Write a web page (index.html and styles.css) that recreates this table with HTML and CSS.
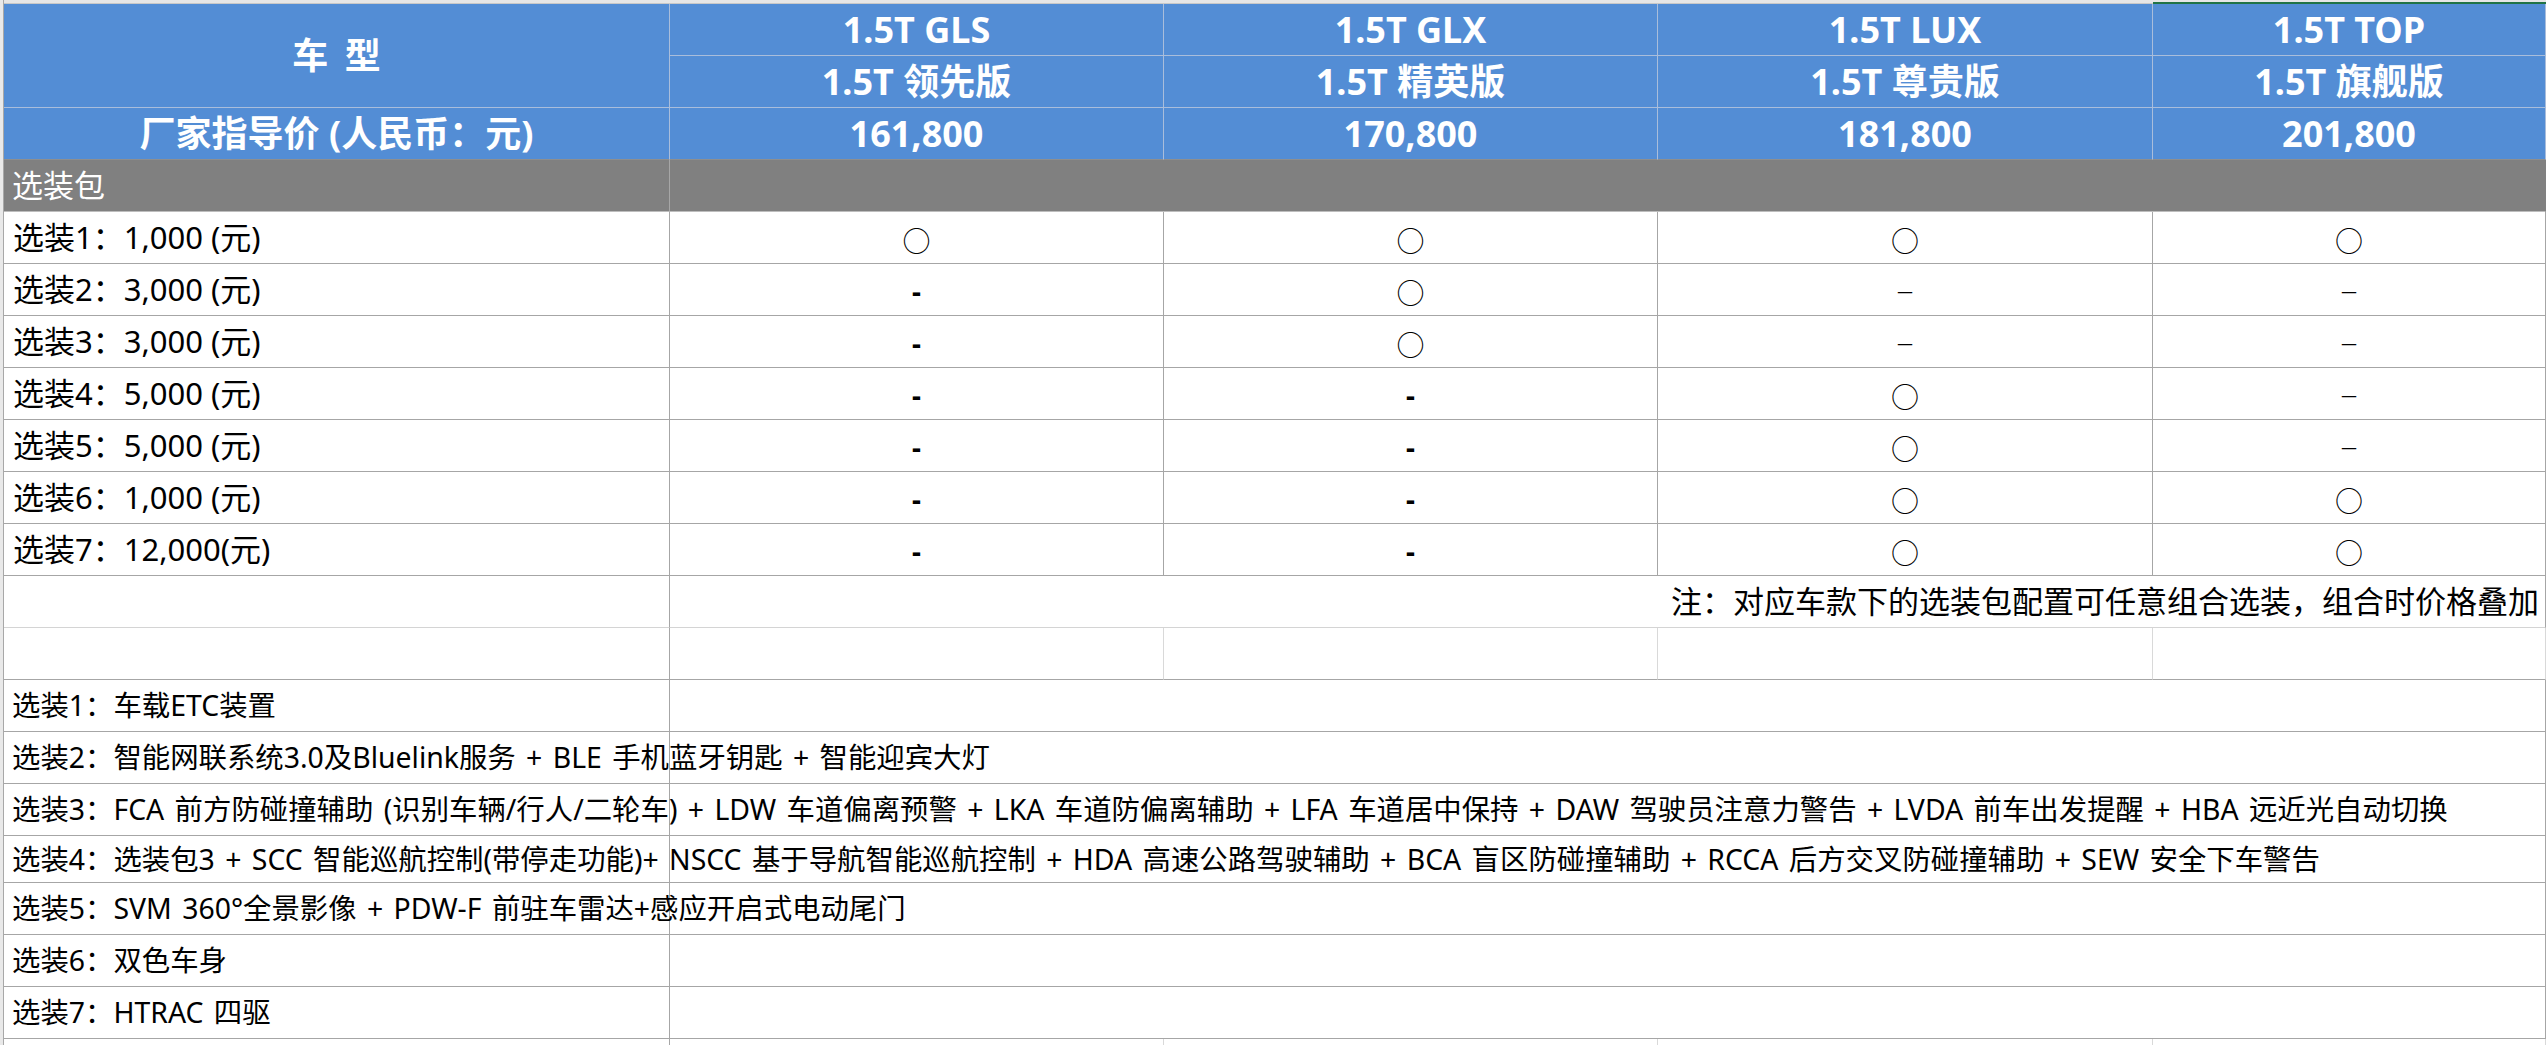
FILE: index.html
```html
<!DOCTYPE html>
<html lang="zh-CN">
<head>
<meta charset="utf-8">
<title>选装包</title>
<link rel="stylesheet" href="styles.css">
</head>
<body>
<div class="sheet">
  <div class="gutter"></div>

  <div class="strip span4"></div>
  <div class="strip sel"></div>

  <div class="cell hd merged2 title">车 型</div>
  <div class="cell hd">1.5T GLS</div>
  <div class="cell hd">1.5T GLX</div>
  <div class="cell hd">1.5T LUX</div>
  <div class="cell hd">1.5T TOP</div>
  <div class="cell hd">1.5T 领先版</div>
  <div class="cell hd">1.5T 精英版</div>
  <div class="cell hd">1.5T 尊贵版</div>
  <div class="cell hd">1.5T 旗舰版</div>
  <div class="cell hd last">厂家指导价 (人民币：元)</div>
  <div class="cell hd last">161,800</div>
  <div class="cell hd last">170,800</div>
  <div class="cell hd last">181,800</div>
  <div class="cell hd last">201,800</div>

  <div class="cell grp">选装包</div>
  <div class="cell grp span4"></div>

  <div class="cell lbl">选装1：1,000 (元)</div>
  <div class="cell sym"><span class="ring">○</span></div>
  <div class="cell sym"><span class="ring">○</span></div>
  <div class="cell sym"><span class="ring">○</span></div>
  <div class="cell sym"><span class="ring">○</span></div>

  <div class="cell lbl">选装2：3,000 (元)</div>
  <div class="cell sym"><span class="dash">-</span></div>
  <div class="cell sym"><span class="ring">○</span></div>
  <div class="cell sym"><span class="endash">–</span></div>
  <div class="cell sym"><span class="endash">–</span></div>

  <div class="cell lbl">选装3：3,000 (元)</div>
  <div class="cell sym"><span class="dash">-</span></div>
  <div class="cell sym"><span class="ring">○</span></div>
  <div class="cell sym"><span class="endash">–</span></div>
  <div class="cell sym"><span class="endash">–</span></div>

  <div class="cell lbl">选装4：5,000 (元)</div>
  <div class="cell sym"><span class="dash">-</span></div>
  <div class="cell sym"><span class="dash">-</span></div>
  <div class="cell sym"><span class="ring">○</span></div>
  <div class="cell sym"><span class="endash">–</span></div>

  <div class="cell lbl">选装5：5,000 (元)</div>
  <div class="cell sym"><span class="dash">-</span></div>
  <div class="cell sym"><span class="dash">-</span></div>
  <div class="cell sym"><span class="ring">○</span></div>
  <div class="cell sym"><span class="endash">–</span></div>

  <div class="cell lbl">选装6：1,000 (元)</div>
  <div class="cell sym"><span class="dash">-</span></div>
  <div class="cell sym"><span class="dash">-</span></div>
  <div class="cell sym"><span class="ring">○</span></div>
  <div class="cell sym"><span class="ring">○</span></div>

  <div class="cell lbl">选装7：12,000(元)</div>
  <div class="cell sym"><span class="dash">-</span></div>
  <div class="cell sym"><span class="dash">-</span></div>
  <div class="cell sym"><span class="ring">○</span></div>
  <div class="cell sym"><span class="ring">○</span></div>

  <div class="cell lbl note-row"></div>
  <div class="cell note note-row span4">注：对应车款下的选装包配置可任意组合选装，组合时价格叠加</div>

  <div class="cell lbl"></div>
  <div class="cell light"></div>
  <div class="cell light"></div>
  <div class="cell light"></div>
  <div class="cell light"></div>

  <div class="cell desc">选装1：车载ETC装置</div>
  <div class="cell rest span4"></div>

  <div class="cell desc">选装2：智能网联系统3.0及Bluelink服务 + BLE 手机蓝牙钥匙 + 智能迎宾大灯</div>
  <div class="cell rest span4"></div>

  <div class="cell desc">选装3：FCA 前方防碰撞辅助 (识别车辆/行人/二轮车) + LDW 车道偏离预警 + LKA 车道防偏离辅助 + LFA 车道居中保持 + DAW 驾驶员注意力警告 + LVDA 前车出发提醒 + HBA 远近光自动切换</div>
  <div class="cell rest span4"></div>

  <div class="cell desc">选装4：选装包3 + SCC 智能巡航控制(带停走功能)+ NSCC 基于导航智能巡航控制 + HDA 高速公路驾驶辅助 + BCA 盲区防碰撞辅助 + RCCA 后方交叉防碰撞辅助 + SEW 安全下车警告</div>
  <div class="cell rest span4"></div>

  <div class="cell desc">选装5：SVM 360°全景影像 + PDW-F 前驻车雷达+感应开启式电动尾门</div>
  <div class="cell rest span4"></div>

  <div class="cell desc">选装6：双色车身</div>
  <div class="cell rest span4"></div>

  <div class="cell desc">选装7：HTRAC 四驱</div>
  <div class="cell rest span4"></div>

  <div class="cell lbl"></div>
  <div class="cell light"></div>
  <div class="cell light"></div>
  <div class="cell light"></div>
  <div class="cell light"></div>
</div>
</body>
</html>
```

FILE: styles.css
```css
html, body {
  margin: 0;
  padding: 0;
  background: #ffffff;
  overflow: hidden;
}

body {
  width: 2548px;
  height: 1045px;
  font-family: "Noto Sans", "Noto Sans CJK SC", sans-serif;
  color: #000;
}

.sheet {
  display: grid;
  grid-template-columns: 4px 666px 494px 494px 495px 393px;
  grid-template-rows: 4px repeat(16, 52px) 47px repeat(3, 52px) 52px;
}

.gutter {
  grid-column: 1;
  grid-row: 1 / -1;
  background: #e9e9e9;
  border-right: 1px solid #a8a8a8;
  box-sizing: border-box;
}

.strip {
  background: #e6e6e6;
  border-bottom: 1px solid #c8c8c8;
  box-sizing: border-box;
}

.strip.sel {
  background: #e6e6e6;
  border-bottom: 2px solid #217346;
}

.span4 {
  grid-column: span 4;
}

.cell {
  box-sizing: border-box;
  border-right: 1px solid #a6a6a6;
  border-bottom: 1px solid #a6a6a6;
  display: flex;
  align-items: center;
  white-space: nowrap;
  min-width: 0;
  font-size: 31px;
  line-height: 1;
}

.hd {
  background: #538dd5;
  color: #ffffff;
  font-weight: 700;
  font-size: 36px;
  justify-content: center;
  border-right-color: #a9bddb;
  border-bottom-color: #a9bddb;
}

.hd.last {
  border-bottom: 1px solid #8e8e8e;
}

.merged2 {
  grid-row: span 2;
}

.title {
  word-spacing: 7px;
}

.grp {
  background: #808080;
  color: #ffffff;
  padding-left: 8px;
  border-bottom-color: #bdbdbd;
}

.grp.span4 {
  border-right-color: #808080;
}

.lbl {
  padding-left: 9px;
}

.sym {
  justify-content: center;
}

.ring {
  font-family: "Noto Sans CJK SC", sans-serif;
  font-size: 28px;
  font-weight: 400;
  position: relative;
  top: 2px;
}

.dash {
  font-family: "Noto Sans", sans-serif;
  font-weight: 700;
  font-size: 28px;
  position: relative;
  top: 1px;
}

.endash {
  font-family: "Liberation Serif", serif;
  font-size: 28px;
  font-weight: 400;
}

.note {
  justify-content: flex-end;
  padding-right: 6px;
}

.note-row {
  border-bottom-color: #d4d4d4;
}

.light {
  border-right-color: #d9d9d9;
}

.desc {
  padding-left: 8px;
  overflow: visible;
  font-size: 28.4px;
  word-spacing: 3px;
}

.rest {
  border-right-color: #a6a6a6;
}
```
